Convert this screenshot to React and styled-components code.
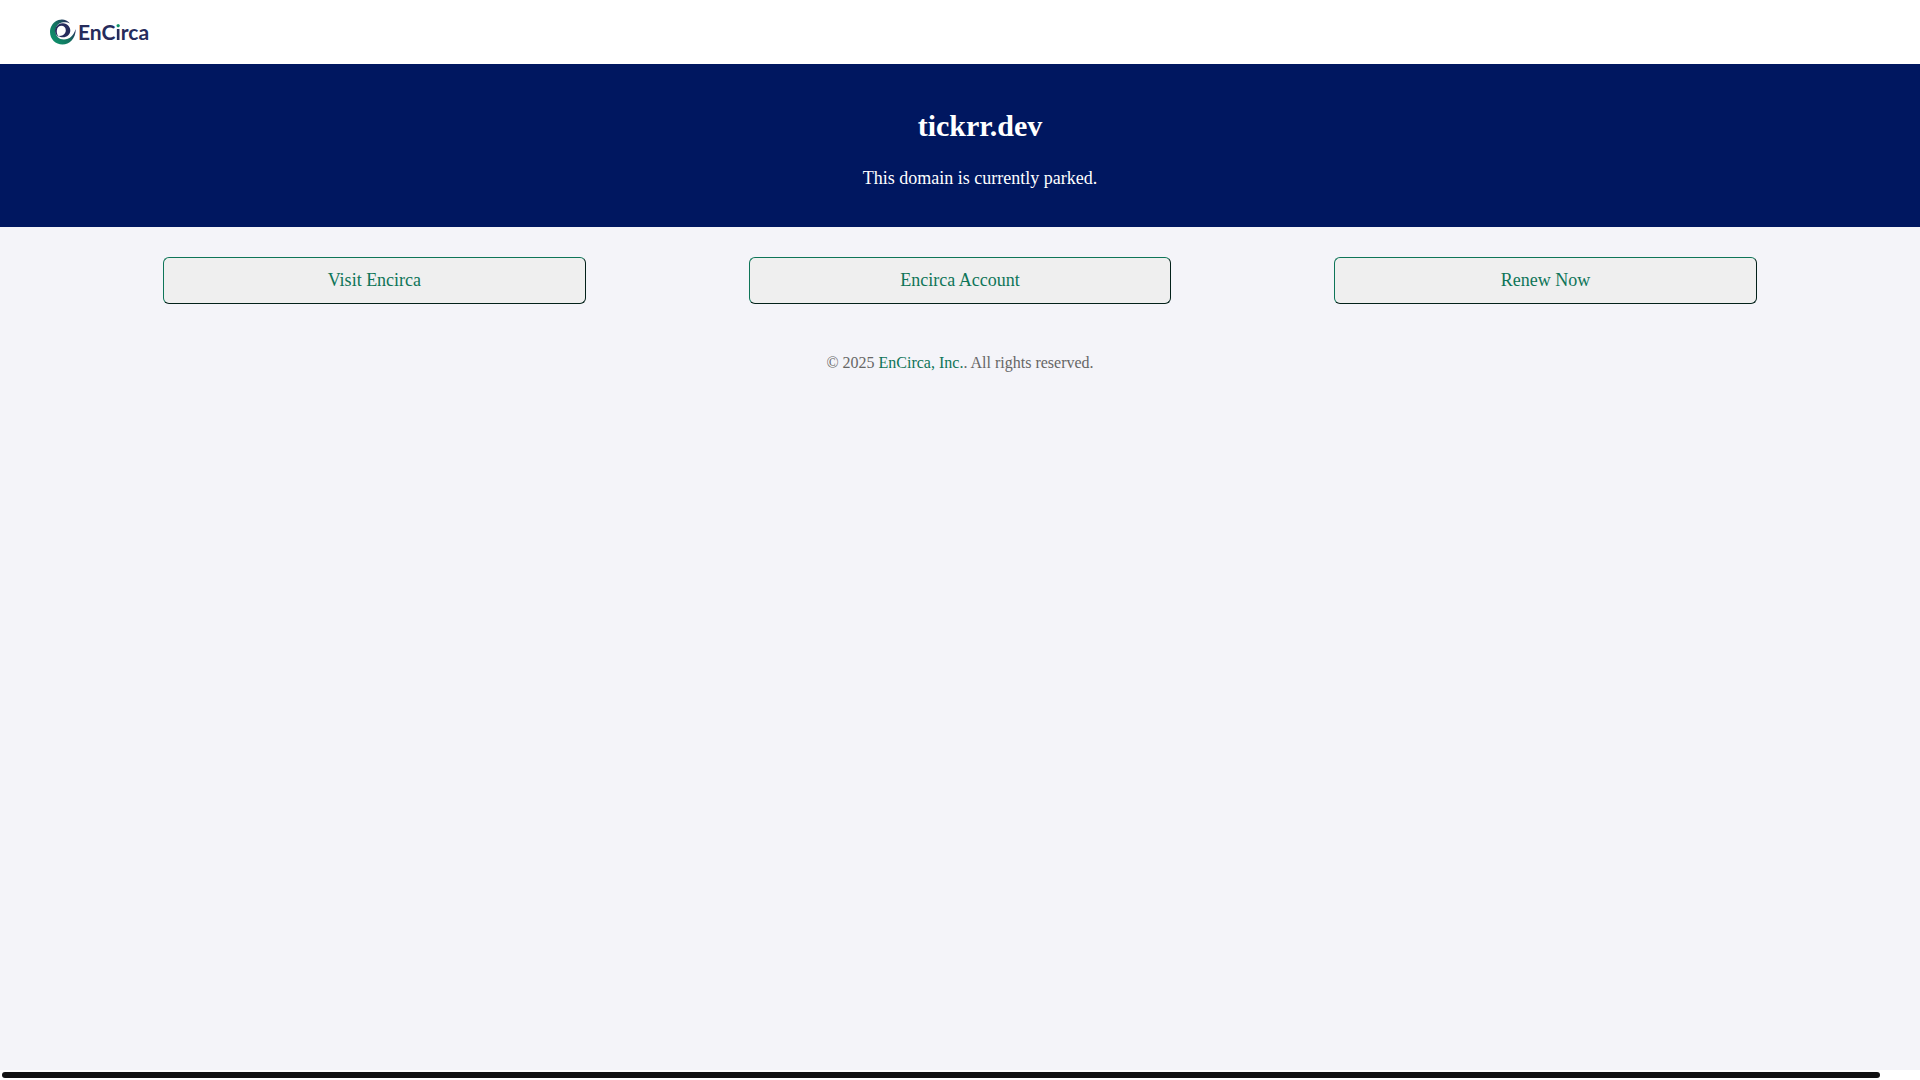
import React from 'react'
import styled, { createGlobalStyle } from 'styled-components'

const GlobalStyle = createGlobalStyle`
  body {
    margin: 0;
    background: #ffffff;
    font-family: "Liberation Serif", "Times New Roman", serif;
  }
`

const Page = styled.div`
  display: flex;
  flex-direction: column;
  height: 100vh;
`

const Content = styled.div`
  flex: 1;
  background-color: #f4f4f9;
  overflow: hidden;
`

const Header = styled.header`
  display: flex;
  align-items: center;
  height: 64px;
  padding: 0 50px;
  background-color: #ffffff;
`

const Logo = styled.a`
  display: flex;
  align-items: center;
  gap: 2px;
  color: #262c5c;
  font-family: Lato, "Open Sans", sans-serif;
  font-size: 21px;
  font-weight: 700;
  line-height: 26px;
  text-decoration: none;

  svg {
    width: 26px;
    height: 26px;
  }
`

const DottedI = styled.span`
  background: linear-gradient(#0f9468 9px, #262c5c 9px);
  background-clip: text;
  color: transparent;
`

/* the banner text is centred in a box that starts after the left padding */
const Banner = styled.section`
  padding: 40px 0 38px 40px;
  background-color: #001760;
  color: #ffffff;
  text-align: center;

  h1 {
    margin: 0;
    font-size: 30px;
    line-height: 44px;
  }

  p {
    margin: 20px 0 0;
    font-size: 18px;
    line-height: 21px;
  }
`

const Actions = styled.div`
  display: flex;
  justify-content: space-evenly;
  padding: 30px 0;
`

const ActionButton = styled.button`
  width: 22%;
  padding: 12px;
  border: 1px solid;
  border-color: #0e7558 #03211a #03211a #0e7558;
  border-radius: 6px;
  background-color: #efefef;
  color: #0e7558;
  font-family: inherit;
  font-size: 18px;
  line-height: 21px;
  cursor: pointer;
`

const Footer = styled.footer`
  padding: 20px;
  color: #666666;
  font-size: 16px;
  line-height: 18px;
  text-align: center;

  a {
    color: #0e7558;
    text-decoration: none;
  }
`

const ScrollTrack = styled.div`
  height: 6px;
  padding: 2px;
  background-color: #ffffff;
`

const ScrollThumb = styled.div`
  width: 98%;
  height: 6px;
  border-radius: 3px;
  background-color: #111111;
`

const Swirl = () => (
  <svg viewBox="0 0 26 26" aria-hidden="true">
    <defs>
      <linearGradient id="ring" x1="0.3" y1="0.9" x2="0.95" y2="0.4">
        <stop offset="0" stopColor="#0f8a68" />
        <stop offset="0.5" stopColor="#14705f" />
        <stop offset="1" stopColor="#262c5c" />
      </linearGradient>
    </defs>
    <path
      fill="url(#ring)"
      d="M20 4.500C17 .8 12.500-.2 8.500 1.100C3.500 2.800 0 7.500 0 13C0 20 5.600 25.500 12.500 25.500C19.500 25.500 25.500 20 25.800 10C23.500 16.500 19.500 20.500 14 20.500C9 20.500 5.500 17 5.500 12C5.500 7 9 3.400 13.500 3.200C16 3.100 18.500 3.500 20 4.500Z"
    />
    <path
      fill="#262c5c"
      d="M5.500 9C7 5.800 10 4 13 4.200C17.500 4.600 20.600 8 20.300 12C20 15.500 17 18.300 13 18.300C11.200 18.300 9.500 17.800 8.500 16.800C12.500 17.500 15.800 14.800 15.800 11.300C15.800 8.500 13.800 6.800 11.500 6.800C9 6.800 7 8.500 6.800 11.500C6.600 13.800 7.300 16.500 9 18.300C6 16.600 4.200 12.500 5.500 9Z"
    />
  </svg>
)

const App = () => {
  return (
    <Page>
      <GlobalStyle />
      <Content>
        <Header>
          <Logo href="#">
            <Swirl />
            <span>EnC<DottedI>i</DottedI>rca</span>
          </Logo>
        </Header>

        <Banner>
          <h1>tickrr.dev</h1>
          <p>This domain is currently parked.</p>
        </Banner>

        <Actions>
          <ActionButton type="button">Visit Encirca</ActionButton>
          <ActionButton type="button">Encirca Account</ActionButton>
          <ActionButton type="button">Renew Now</ActionButton>
        </Actions>

        <Footer>
          © 2025 <a href="#">EnCirca, Inc.</a>. All rights reserved.
        </Footer>
      </Content>

      <ScrollTrack>
        <ScrollThumb />
      </ScrollTrack>
    </Page>
  )
}

export default App
